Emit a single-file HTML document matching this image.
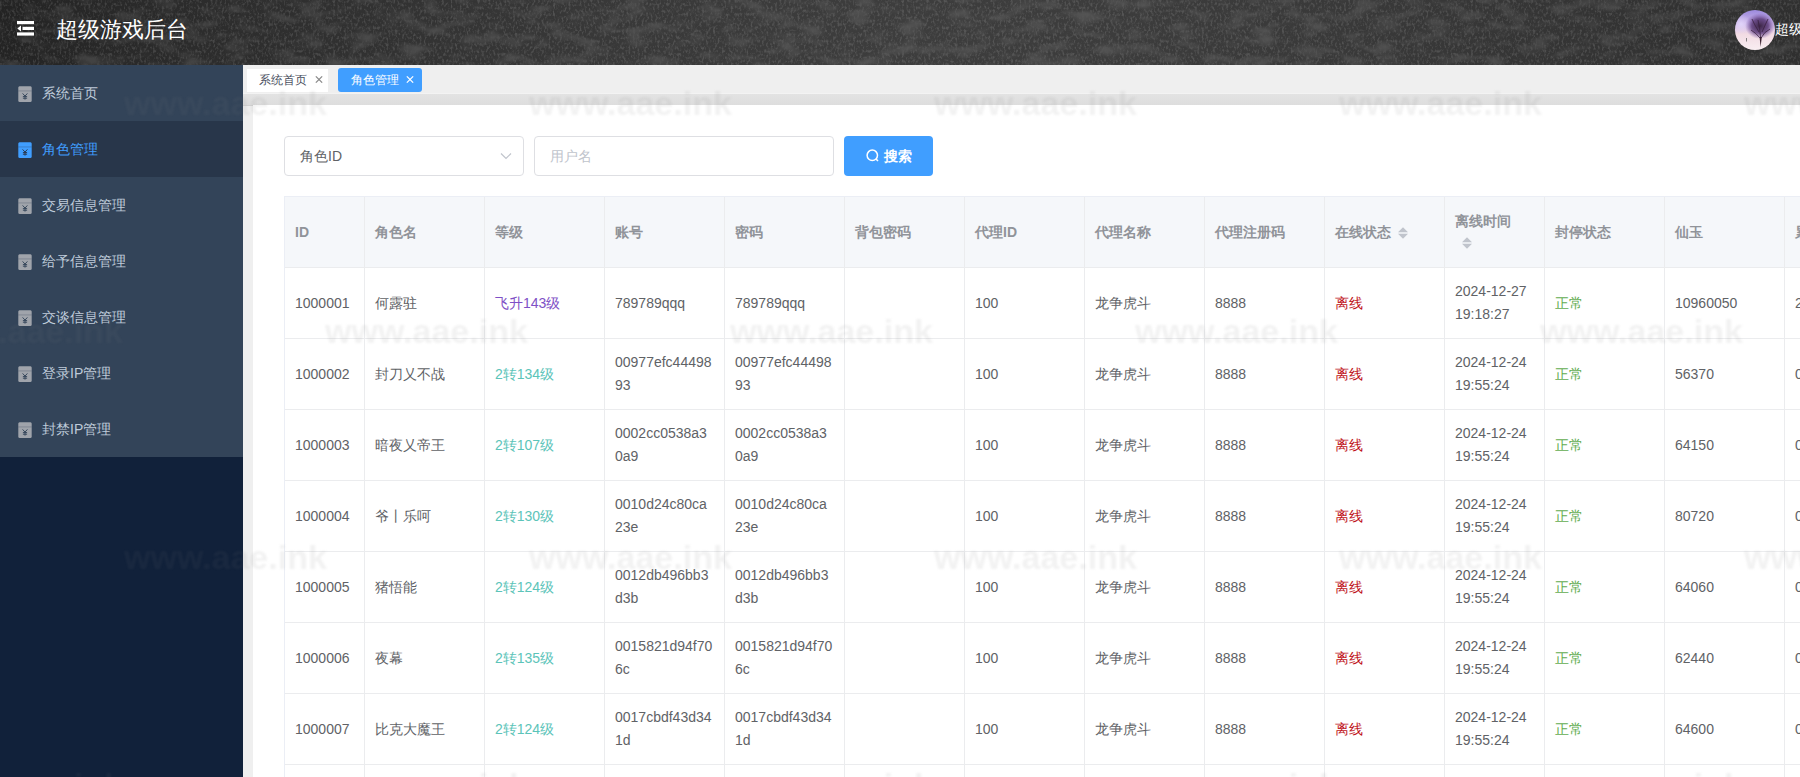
<!DOCTYPE html><html><head><meta charset="utf-8"><style>*{box-sizing:border-box;margin:0;padding:0}
html,body{width:1800px;height:777px;overflow:hidden;font-family:"Liberation Sans",sans-serif;background:#fff;position:relative}
.abs{position:absolute}
#hdr{left:0;top:0;width:1800px;height:65px;background:linear-gradient(90deg,#232323 0%,#2a2a2a 8%,#313131 20%,#383838 33%,#3d3d3d 50%,#3c3c3c 62%,#393939 75%,#343434 88%,#2f2f2f 100%)}
#noise{left:0;top:0;width:1800px;height:65px;opacity:0.12}
#burger{left:16.5px;top:21.4px;width:17px;height:14.6px}
#title{left:56px;top:17px;font-size:22.3px;color:#fff;line-height:26px;white-space:nowrap}
#avatar{left:1735px;top:10px;width:40px;height:40px}
#uname{left:1775px;top:21px;font-size:14px;line-height:16px;color:#fff;white-space:nowrap}
#side{left:0;top:65px;width:243px;height:712px;background:#11213a}
.mi{position:absolute;left:0;width:243px;height:56px;background:#334459;color:#bfcbd9;font-size:14px}
.mi.act{background:#28364a;color:#409eff}
.mi .ic{position:absolute;left:18px;top:21px;width:14px;height:16px}
.mi .tx{position:absolute;left:42px;top:19px;line-height:18px;white-space:nowrap}
#main{left:243px;top:65px;width:1557px;height:712px;background:#efefef}
#tabs{left:243px;top:65px;width:1557px;height:30px}
.tab{position:absolute;font-size:12px;line-height:14px;white-space:nowrap}
.tab .tl{position:absolute;top:5px}
.tab.t1{left:4px;top:4px;width:81px;height:23px;background:#fff;color:#495060}
.tab.t1 .tl{left:12px;top:4px}
.tab.t2{left:95px;top:3px;width:84px;height:24px;background:#409eff;color:#fff;border-radius:3px}
.tab.t2 .tl{left:13px}
.tab .x{position:absolute;width:8px;height:7px}
.tab.t1 .x{left:68px;top:7.3px}
.tab.t2 .x{left:68px;top:8px}
#tabshadow{left:243px;top:93px;width:1557px;height:13px;background:linear-gradient(#e3e3e3,#dddddd);border-top:1px solid #f3f3f3;border-bottom:1px solid #d3d3d3}
#card{left:253px;top:105px;width:1547px;height:672px;background:#fff}
.inp{position:absolute;top:136px;height:40px;border:1px solid #dedfe3;border-radius:4px;background:#fff;font-size:14px;line-height:38px;padding-left:15px;color:#606266}
#sel{left:284px;width:240px}
#user{left:534px;width:300px}
.chev{position:absolute;right:11px;top:15px;width:12px;height:8px}
#btn{left:844px;top:136px;width:89px;height:40px;background:#409eff;border-radius:4px;color:#fff;font-size:14px;font-weight:bold}
.sic{position:absolute;left:22px;top:13px;width:14px;height:14px}
.bt{position:absolute;left:40px;top:11px;line-height:18px}
.th,.td{position:absolute;border-right:1px solid #ebecee;border-bottom:1px solid #ebecee}
.th{background:#f5f7fa;color:#909399;font-weight:bold;font-size:14px}
.td{color:#606266;font-size:14px}
.tt{position:absolute;left:10px;top:26px;line-height:18px;white-space:nowrap}
.td .tt{top:26px}
.tt2{position:absolute;left:10px;top:12px;line-height:23px;white-space:nowrap}
.sort{width:10px;height:12px;display:block}
.sw{position:absolute;width:10px;height:11px}
.wm{position:absolute;font-size:34px;line-height:40px;font-weight:bold;color:rgba(140,140,140,0.11);white-space:nowrap;pointer-events:none;filter:blur(0.9px)}
</style></head><body>
<div id="hdr" class="abs"></div><svg id="noise" class="abs" width="1800" height="65"><filter id="nf" x="0" y="0" width="100%" height="100%"><feTurbulence type="fractalNoise" baseFrequency="0.04 0.09" numOctaves="2" seed="3" result="a"/><feColorMatrix in="a" values="0 0 0 0 1  0 0 0 0 1  0 0 0 0 1  0 0 0 -2.4 1.3" result="ca"/><feTurbulence type="fractalNoise" baseFrequency="0.45 0.3" numOctaves="2" seed="11" result="b"/><feColorMatrix in="b" values="0 0 0 0 1  0 0 0 0 1  0 0 0 0 1  0 0 0 -3.5 1.85" result="cb"/><feMerge><feMergeNode in="ca"/><feMergeNode in="cb"/></feMerge></filter><rect width="1800" height="65" filter="url(#nf)"/></svg>
<svg id="burger" class="abs" viewBox="0 0 17 14.6"><rect x="0" y="0" width="17" height="3.2" fill="#fff"/><rect x="5.5" y="5.8" width="11.5" height="3.2" fill="#fff"/><polygon points="0.3,7.5 4,4.6 4,10.4" fill="#fff"/><rect x="0" y="11.4" width="17" height="3.2" fill="#fff"/></svg>
<div id="title" class="abs">超级游戏后台</div>
<svg id="avatar" class="abs" viewBox="0 0 40 40"><defs><clipPath id="cc"><circle cx="20" cy="20" r="20"/></clipPath>
<linearGradient id="ag" x1="0" y1="0" x2="0" y2="1"><stop offset="0" stop-color="#9c8ade"/><stop offset="0.35" stop-color="#cdb5e6"/><stop offset="0.6" stop-color="#f2dbe3"/><stop offset="1" stop-color="#f9eef2"/></linearGradient>
<radialGradient id="hl" cx="0.5" cy="0.5" r="0.5"><stop offset="0" stop-color="#e6dcff" stop-opacity="0.8"/><stop offset="1" stop-color="#e6dcff" stop-opacity="0"/></radialGradient>
<radialGradient id="tg" cx="0.5" cy="0.5" r="0.5"><stop offset="0" stop-color="#3c2646"/><stop offset="0.55" stop-color="#5a3a78" stop-opacity="0.85"/><stop offset="1" stop-color="#7a5ab0" stop-opacity="0"/></radialGradient></defs>
<g clip-path="url(#cc)"><rect width="40" height="40" fill="url(#ag)"/><ellipse cx="6" cy="14" rx="10" ry="10" fill="url(#hl)"/><ellipse cx="25" cy="16" rx="15" ry="13" fill="url(#tg)"/><path d="M25.6 37 L24.6 27 L26.8 27 Z" fill="#3a2030"/><path d="M25 28 Q21 23 16 20 M26 28 Q29 22 35 19 M25.5 27 Q25 19 23 10 M24 22 Q19 14 17 9 M27 22 Q31 13 33 9" stroke="#3a2040" stroke-width="1" fill="none" opacity="0.8"/><rect x="11.2" y="28" width="0.7" height="3.5" fill="#555"/></g></svg><div id="uname" class="abs">超级</div>
<div id="side" class="abs">
<div class="mi" style="top:0px"><svg class="ic" viewBox="0 0 14 16"><path d="M1.5 0.3 H12.5 Q13.7 0.3 13.7 1.8 V14.5 Q13.7 16 12.3 16 H1.7 Q0.3 16 0.3 14.5 V1.8 Q0.3 0.3 1.5 0.3 Z" fill="#a0a4ab"/><rect x="0.3" y="4.6" width="13.4" height="0.7" fill="#334459" opacity="0.4"/><path d="M4.6 7.4 L7 10.1 L9.4 7.4 M7 10.1 V13.6 M4.9 10.6 H9.1 M4.9 12.2 H9.1" stroke="#334459" stroke-width="0.95" fill="none"/></svg><span class="tx">系统首页</span></div>
<div class="mi act" style="top:56px"><svg class="ic" viewBox="0 0 14 16"><path d="M1.5 0.3 H12.5 Q13.7 0.3 13.7 1.8 V14.5 Q13.7 16 12.3 16 H1.7 Q0.3 16 0.3 14.5 V1.8 Q0.3 0.3 1.5 0.3 Z" fill="#409eff"/><rect x="0.3" y="4.6" width="13.4" height="0.7" fill="#28364a" opacity="0.4"/><path d="M4.6 7.4 L7 10.1 L9.4 7.4 M7 10.1 V13.6 M4.9 10.6 H9.1 M4.9 12.2 H9.1" stroke="#28364a" stroke-width="0.95" fill="none"/></svg><span class="tx">角色管理</span></div>
<div class="mi" style="top:112px"><svg class="ic" viewBox="0 0 14 16"><path d="M1.5 0.3 H12.5 Q13.7 0.3 13.7 1.8 V14.5 Q13.7 16 12.3 16 H1.7 Q0.3 16 0.3 14.5 V1.8 Q0.3 0.3 1.5 0.3 Z" fill="#a0a4ab"/><rect x="0.3" y="4.6" width="13.4" height="0.7" fill="#334459" opacity="0.4"/><path d="M4.6 7.4 L7 10.1 L9.4 7.4 M7 10.1 V13.6 M4.9 10.6 H9.1 M4.9 12.2 H9.1" stroke="#334459" stroke-width="0.95" fill="none"/></svg><span class="tx">交易信息管理</span></div>
<div class="mi" style="top:168px"><svg class="ic" viewBox="0 0 14 16"><path d="M1.5 0.3 H12.5 Q13.7 0.3 13.7 1.8 V14.5 Q13.7 16 12.3 16 H1.7 Q0.3 16 0.3 14.5 V1.8 Q0.3 0.3 1.5 0.3 Z" fill="#a0a4ab"/><rect x="0.3" y="4.6" width="13.4" height="0.7" fill="#334459" opacity="0.4"/><path d="M4.6 7.4 L7 10.1 L9.4 7.4 M7 10.1 V13.6 M4.9 10.6 H9.1 M4.9 12.2 H9.1" stroke="#334459" stroke-width="0.95" fill="none"/></svg><span class="tx">给予信息管理</span></div>
<div class="mi" style="top:224px"><svg class="ic" viewBox="0 0 14 16"><path d="M1.5 0.3 H12.5 Q13.7 0.3 13.7 1.8 V14.5 Q13.7 16 12.3 16 H1.7 Q0.3 16 0.3 14.5 V1.8 Q0.3 0.3 1.5 0.3 Z" fill="#a0a4ab"/><rect x="0.3" y="4.6" width="13.4" height="0.7" fill="#334459" opacity="0.4"/><path d="M4.6 7.4 L7 10.1 L9.4 7.4 M7 10.1 V13.6 M4.9 10.6 H9.1 M4.9 12.2 H9.1" stroke="#334459" stroke-width="0.95" fill="none"/></svg><span class="tx">交谈信息管理</span></div>
<div class="mi" style="top:280px"><svg class="ic" viewBox="0 0 14 16"><path d="M1.5 0.3 H12.5 Q13.7 0.3 13.7 1.8 V14.5 Q13.7 16 12.3 16 H1.7 Q0.3 16 0.3 14.5 V1.8 Q0.3 0.3 1.5 0.3 Z" fill="#a0a4ab"/><rect x="0.3" y="4.6" width="13.4" height="0.7" fill="#334459" opacity="0.4"/><path d="M4.6 7.4 L7 10.1 L9.4 7.4 M7 10.1 V13.6 M4.9 10.6 H9.1 M4.9 12.2 H9.1" stroke="#334459" stroke-width="0.95" fill="none"/></svg><span class="tx">登录IP管理</span></div>
<div class="mi" style="top:336px"><svg class="ic" viewBox="0 0 14 16"><path d="M1.5 0.3 H12.5 Q13.7 0.3 13.7 1.8 V14.5 Q13.7 16 12.3 16 H1.7 Q0.3 16 0.3 14.5 V1.8 Q0.3 0.3 1.5 0.3 Z" fill="#a0a4ab"/><rect x="0.3" y="4.6" width="13.4" height="0.7" fill="#334459" opacity="0.4"/><path d="M4.6 7.4 L7 10.1 L9.4 7.4 M7 10.1 V13.6 M4.9 10.6 H9.1 M4.9 12.2 H9.1" stroke="#334459" stroke-width="0.95" fill="none"/></svg><span class="tx">封禁IP管理</span></div>
</div>
<div id="main" class="abs"></div>
<div id="tabs" class="abs"><div class="tab t1"><span class="tl">系统首页</span><svg class="x" viewBox="0 0 8 7"><line x1="0.8" y1="0.3" x2="7.2" y2="6.7" stroke="#888" stroke-width="1.1"/><line x1="7.2" y1="0.3" x2="0.8" y2="6.7" stroke="#888" stroke-width="1.1"/></svg></div><div class="tab t2"><span class="tl">角色管理</span><svg class="x" viewBox="0 0 8 7"><line x1="0.8" y1="0.3" x2="7.2" y2="6.7" stroke="#fff" stroke-width="1.1"/><line x1="7.2" y1="0.3" x2="0.8" y2="6.7" stroke="#fff" stroke-width="1.1"/></svg></div></div>
<div id="tabshadow" class="abs"></div>
<div id="card" class="abs"></div>
<div class="inp" id="sel">角色ID<svg class="chev" viewBox="0 0 12 8"><polyline points="1,1.5 6,6.5 11,1.5" fill="none" stroke="#c0c4cc" stroke-width="1.2"/></svg></div>
<div class="inp" id="user"><span style="color:#c0c4cc">用户名</span></div>
<div id="btn" class="abs"><svg class="sic" viewBox="0 0 14 14"><circle cx="6.3" cy="6.3" r="5.2" fill="none" stroke="#fff" stroke-width="1.5"/><line x1="9.9" y1="9.9" x2="12" y2="12" stroke="#fff" stroke-width="1.5"/></svg><span class="bt">搜索</span></div>
<div id="tbl" class="abs">
<div class="abs" style="left:284px;top:196px;width:1516px;height:581px;border-left:1px solid #ebeef5;border-top:1px solid #ebeef5"></div>
<div class="th" style="left:285px;top:197px;width:80px;height:71px"><span class="tt">ID</span></div>
<div class="th" style="left:365px;top:197px;width:120px;height:71px"><span class="tt">角色名</span></div>
<div class="th" style="left:485px;top:197px;width:120px;height:71px"><span class="tt">等级</span></div>
<div class="th" style="left:605px;top:197px;width:120px;height:71px"><span class="tt">账号</span></div>
<div class="th" style="left:725px;top:197px;width:120px;height:71px"><span class="tt">密码</span></div>
<div class="th" style="left:845px;top:197px;width:120px;height:71px"><span class="tt">背包密码</span></div>
<div class="th" style="left:965px;top:197px;width:120px;height:71px"><span class="tt">代理ID</span></div>
<div class="th" style="left:1085px;top:197px;width:120px;height:71px"><span class="tt">代理名称</span></div>
<div class="th" style="left:1205px;top:197px;width:120px;height:71px"><span class="tt">代理注册码</span></div>
<div class="th" style="left:1325px;top:197px;width:120px;height:71px"><span class="tt">在线状态</span><span class="sw" style="left:73px;top:30px"><svg class="sort" viewBox="0 0 10 11.5"><polygon points="5,0 10,5 0,5" fill="#c0c4cc"/><polygon points="5,11.5 10,6.5 0,6.5" fill="#c0c4cc"/></svg></span></div>
<div class="th" style="left:1445px;top:197px;width:100px;height:71px"><span class="tt" style="top:15px">离线时间</span><span class="sw" style="left:17px;top:40px"><svg class="sort" viewBox="0 0 10 11.5"><polygon points="5,0 10,5 0,5" fill="#c0c4cc"/><polygon points="5,11.5 10,6.5 0,6.5" fill="#c0c4cc"/></svg></span></div>
<div class="th" style="left:1545px;top:197px;width:120px;height:71px"><span class="tt">封停状态</span></div>
<div class="th" style="left:1665px;top:197px;width:120px;height:71px"><span class="tt">仙玉</span></div>
<div class="th" style="left:1785px;top:197px;width:120px;height:71px"><span class="tt">累</span></div>
<div class="td" style="left:285px;top:268px;width:80px;height:71px"><span class="tt">1000001</span></div>
<div class="td" style="left:365px;top:268px;width:120px;height:71px"><span class="tt">何露驻</span></div>
<div class="td" style="left:485px;top:268px;width:120px;height:71px"><span class="tt" style="color:#7e50c6">飞升143级</span></div>
<div class="td" style="left:605px;top:268px;width:120px;height:71px"><span class="tt">789789qqq</span></div>
<div class="td" style="left:725px;top:268px;width:120px;height:71px"><span class="tt">789789qqq</span></div>
<div class="td" style="left:845px;top:268px;width:120px;height:71px"><span class="tt"></span></div>
<div class="td" style="left:965px;top:268px;width:120px;height:71px"><span class="tt">100</span></div>
<div class="td" style="left:1085px;top:268px;width:120px;height:71px"><span class="tt">龙争虎斗</span></div>
<div class="td" style="left:1205px;top:268px;width:120px;height:71px"><span class="tt">8888</span></div>
<div class="td" style="left:1325px;top:268px;width:120px;height:71px"><span class="tt" style="color:#c0141b">离线</span></div>
<div class="td" style="left:1445px;top:268px;width:100px;height:71px"><span class="tt2">2024-12-27<br>19:18:27</span></div>
<div class="td" style="left:1545px;top:268px;width:120px;height:71px"><span class="tt" style="color:#62ad50">正常</span></div>
<div class="td" style="left:1665px;top:268px;width:120px;height:71px"><span class="tt">10960050</span></div>
<div class="td" style="left:1785px;top:268px;width:120px;height:71px"><span class="tt">2</span></div>
<div class="td" style="left:285px;top:339px;width:80px;height:71px"><span class="tt">1000002</span></div>
<div class="td" style="left:365px;top:339px;width:120px;height:71px"><span class="tt">封刀乂不战</span></div>
<div class="td" style="left:485px;top:339px;width:120px;height:71px"><span class="tt" style="color:#5cc4b9">2转134级</span></div>
<div class="td" style="left:605px;top:339px;width:120px;height:71px"><span class="tt2">00977efc44498<br>93</span></div>
<div class="td" style="left:725px;top:339px;width:120px;height:71px"><span class="tt2">00977efc44498<br>93</span></div>
<div class="td" style="left:845px;top:339px;width:120px;height:71px"><span class="tt"></span></div>
<div class="td" style="left:965px;top:339px;width:120px;height:71px"><span class="tt">100</span></div>
<div class="td" style="left:1085px;top:339px;width:120px;height:71px"><span class="tt">龙争虎斗</span></div>
<div class="td" style="left:1205px;top:339px;width:120px;height:71px"><span class="tt">8888</span></div>
<div class="td" style="left:1325px;top:339px;width:120px;height:71px"><span class="tt" style="color:#c0141b">离线</span></div>
<div class="td" style="left:1445px;top:339px;width:100px;height:71px"><span class="tt2">2024-12-24<br>19:55:24</span></div>
<div class="td" style="left:1545px;top:339px;width:120px;height:71px"><span class="tt" style="color:#62ad50">正常</span></div>
<div class="td" style="left:1665px;top:339px;width:120px;height:71px"><span class="tt">56370</span></div>
<div class="td" style="left:1785px;top:339px;width:120px;height:71px"><span class="tt">0</span></div>
<div class="td" style="left:285px;top:410px;width:80px;height:71px"><span class="tt">1000003</span></div>
<div class="td" style="left:365px;top:410px;width:120px;height:71px"><span class="tt">暗夜乂帝王</span></div>
<div class="td" style="left:485px;top:410px;width:120px;height:71px"><span class="tt" style="color:#5cc4b9">2转107级</span></div>
<div class="td" style="left:605px;top:410px;width:120px;height:71px"><span class="tt2">0002cc0538a3<br>0a9</span></div>
<div class="td" style="left:725px;top:410px;width:120px;height:71px"><span class="tt2">0002cc0538a3<br>0a9</span></div>
<div class="td" style="left:845px;top:410px;width:120px;height:71px"><span class="tt"></span></div>
<div class="td" style="left:965px;top:410px;width:120px;height:71px"><span class="tt">100</span></div>
<div class="td" style="left:1085px;top:410px;width:120px;height:71px"><span class="tt">龙争虎斗</span></div>
<div class="td" style="left:1205px;top:410px;width:120px;height:71px"><span class="tt">8888</span></div>
<div class="td" style="left:1325px;top:410px;width:120px;height:71px"><span class="tt" style="color:#c0141b">离线</span></div>
<div class="td" style="left:1445px;top:410px;width:100px;height:71px"><span class="tt2">2024-12-24<br>19:55:24</span></div>
<div class="td" style="left:1545px;top:410px;width:120px;height:71px"><span class="tt" style="color:#62ad50">正常</span></div>
<div class="td" style="left:1665px;top:410px;width:120px;height:71px"><span class="tt">64150</span></div>
<div class="td" style="left:1785px;top:410px;width:120px;height:71px"><span class="tt">0</span></div>
<div class="td" style="left:285px;top:481px;width:80px;height:71px"><span class="tt">1000004</span></div>
<div class="td" style="left:365px;top:481px;width:120px;height:71px"><span class="tt">爷丨乐呵</span></div>
<div class="td" style="left:485px;top:481px;width:120px;height:71px"><span class="tt" style="color:#5cc4b9">2转130级</span></div>
<div class="td" style="left:605px;top:481px;width:120px;height:71px"><span class="tt2">0010d24c80ca<br>23e</span></div>
<div class="td" style="left:725px;top:481px;width:120px;height:71px"><span class="tt2">0010d24c80ca<br>23e</span></div>
<div class="td" style="left:845px;top:481px;width:120px;height:71px"><span class="tt"></span></div>
<div class="td" style="left:965px;top:481px;width:120px;height:71px"><span class="tt">100</span></div>
<div class="td" style="left:1085px;top:481px;width:120px;height:71px"><span class="tt">龙争虎斗</span></div>
<div class="td" style="left:1205px;top:481px;width:120px;height:71px"><span class="tt">8888</span></div>
<div class="td" style="left:1325px;top:481px;width:120px;height:71px"><span class="tt" style="color:#c0141b">离线</span></div>
<div class="td" style="left:1445px;top:481px;width:100px;height:71px"><span class="tt2">2024-12-24<br>19:55:24</span></div>
<div class="td" style="left:1545px;top:481px;width:120px;height:71px"><span class="tt" style="color:#62ad50">正常</span></div>
<div class="td" style="left:1665px;top:481px;width:120px;height:71px"><span class="tt">80720</span></div>
<div class="td" style="left:1785px;top:481px;width:120px;height:71px"><span class="tt">0</span></div>
<div class="td" style="left:285px;top:552px;width:80px;height:71px"><span class="tt">1000005</span></div>
<div class="td" style="left:365px;top:552px;width:120px;height:71px"><span class="tt">猪悟能</span></div>
<div class="td" style="left:485px;top:552px;width:120px;height:71px"><span class="tt" style="color:#5cc4b9">2转124级</span></div>
<div class="td" style="left:605px;top:552px;width:120px;height:71px"><span class="tt2">0012db496bb3<br>d3b</span></div>
<div class="td" style="left:725px;top:552px;width:120px;height:71px"><span class="tt2">0012db496bb3<br>d3b</span></div>
<div class="td" style="left:845px;top:552px;width:120px;height:71px"><span class="tt"></span></div>
<div class="td" style="left:965px;top:552px;width:120px;height:71px"><span class="tt">100</span></div>
<div class="td" style="left:1085px;top:552px;width:120px;height:71px"><span class="tt">龙争虎斗</span></div>
<div class="td" style="left:1205px;top:552px;width:120px;height:71px"><span class="tt">8888</span></div>
<div class="td" style="left:1325px;top:552px;width:120px;height:71px"><span class="tt" style="color:#c0141b">离线</span></div>
<div class="td" style="left:1445px;top:552px;width:100px;height:71px"><span class="tt2">2024-12-24<br>19:55:24</span></div>
<div class="td" style="left:1545px;top:552px;width:120px;height:71px"><span class="tt" style="color:#62ad50">正常</span></div>
<div class="td" style="left:1665px;top:552px;width:120px;height:71px"><span class="tt">64060</span></div>
<div class="td" style="left:1785px;top:552px;width:120px;height:71px"><span class="tt">0</span></div>
<div class="td" style="left:285px;top:623px;width:80px;height:71px"><span class="tt">1000006</span></div>
<div class="td" style="left:365px;top:623px;width:120px;height:71px"><span class="tt">夜幕</span></div>
<div class="td" style="left:485px;top:623px;width:120px;height:71px"><span class="tt" style="color:#5cc4b9">2转135级</span></div>
<div class="td" style="left:605px;top:623px;width:120px;height:71px"><span class="tt2">0015821d94f70<br>6c</span></div>
<div class="td" style="left:725px;top:623px;width:120px;height:71px"><span class="tt2">0015821d94f70<br>6c</span></div>
<div class="td" style="left:845px;top:623px;width:120px;height:71px"><span class="tt"></span></div>
<div class="td" style="left:965px;top:623px;width:120px;height:71px"><span class="tt">100</span></div>
<div class="td" style="left:1085px;top:623px;width:120px;height:71px"><span class="tt">龙争虎斗</span></div>
<div class="td" style="left:1205px;top:623px;width:120px;height:71px"><span class="tt">8888</span></div>
<div class="td" style="left:1325px;top:623px;width:120px;height:71px"><span class="tt" style="color:#c0141b">离线</span></div>
<div class="td" style="left:1445px;top:623px;width:100px;height:71px"><span class="tt2">2024-12-24<br>19:55:24</span></div>
<div class="td" style="left:1545px;top:623px;width:120px;height:71px"><span class="tt" style="color:#62ad50">正常</span></div>
<div class="td" style="left:1665px;top:623px;width:120px;height:71px"><span class="tt">62440</span></div>
<div class="td" style="left:1785px;top:623px;width:120px;height:71px"><span class="tt">0</span></div>
<div class="td" style="left:285px;top:694px;width:80px;height:71px"><span class="tt">1000007</span></div>
<div class="td" style="left:365px;top:694px;width:120px;height:71px"><span class="tt">比克大魔王</span></div>
<div class="td" style="left:485px;top:694px;width:120px;height:71px"><span class="tt" style="color:#5cc4b9">2转124级</span></div>
<div class="td" style="left:605px;top:694px;width:120px;height:71px"><span class="tt2">0017cbdf43d34<br>1d</span></div>
<div class="td" style="left:725px;top:694px;width:120px;height:71px"><span class="tt2">0017cbdf43d34<br>1d</span></div>
<div class="td" style="left:845px;top:694px;width:120px;height:71px"><span class="tt"></span></div>
<div class="td" style="left:965px;top:694px;width:120px;height:71px"><span class="tt">100</span></div>
<div class="td" style="left:1085px;top:694px;width:120px;height:71px"><span class="tt">龙争虎斗</span></div>
<div class="td" style="left:1205px;top:694px;width:120px;height:71px"><span class="tt">8888</span></div>
<div class="td" style="left:1325px;top:694px;width:120px;height:71px"><span class="tt" style="color:#c0141b">离线</span></div>
<div class="td" style="left:1445px;top:694px;width:100px;height:71px"><span class="tt2">2024-12-24<br>19:55:24</span></div>
<div class="td" style="left:1545px;top:694px;width:120px;height:71px"><span class="tt" style="color:#62ad50">正常</span></div>
<div class="td" style="left:1665px;top:694px;width:120px;height:71px"><span class="tt">64600</span></div>
<div class="td" style="left:1785px;top:694px;width:120px;height:71px"><span class="tt">0</span></div>
<div class="td" style="left:285px;top:765px;width:80px;height:71px"><span class="tt"></span></div>
<div class="td" style="left:365px;top:765px;width:120px;height:71px"><span class="tt"></span></div>
<div class="td" style="left:485px;top:765px;width:120px;height:71px"><span class="tt"></span></div>
<div class="td" style="left:605px;top:765px;width:120px;height:71px"><span class="tt"></span></div>
<div class="td" style="left:725px;top:765px;width:120px;height:71px"><span class="tt"></span></div>
<div class="td" style="left:845px;top:765px;width:120px;height:71px"><span class="tt"></span></div>
<div class="td" style="left:965px;top:765px;width:120px;height:71px"><span class="tt"></span></div>
<div class="td" style="left:1085px;top:765px;width:120px;height:71px"><span class="tt"></span></div>
<div class="td" style="left:1205px;top:765px;width:120px;height:71px"><span class="tt"></span></div>
<div class="td" style="left:1325px;top:765px;width:120px;height:71px"><span class="tt" style="color:#c0141b"></span></div>
<div class="td" style="left:1445px;top:765px;width:100px;height:71px"><span class="tt"></span></div>
<div class="td" style="left:1545px;top:765px;width:120px;height:71px"><span class="tt" style="color:#62ad50"></span></div>
<div class="td" style="left:1665px;top:765px;width:120px;height:71px"><span class="tt"></span></div>
<div class="td" style="left:1785px;top:765px;width:120px;height:71px"><span class="tt"></span></div>
</div>
<div class="abs" style="left:0px;top:0;width:243px;height:777px;overflow:hidden">
<div class="wm" style="left:124px;top:83px;color:rgba(140,140,140,0.07)">www.aae.ink</div>
<div class="wm" style="left:529px;top:83px;color:rgba(140,140,140,0.07)">www.aae.ink</div>
<div class="wm" style="left:934px;top:83px;color:rgba(140,140,140,0.07)">www.aae.ink</div>
<div class="wm" style="left:1339px;top:83px;color:rgba(140,140,140,0.07)">www.aae.ink</div>
<div class="wm" style="left:1744px;top:83px;color:rgba(140,140,140,0.07)">www.aae.ink</div>
<div class="wm" style="left:-80px;top:311px;color:rgba(140,140,140,0.07)">www.aae.ink</div>
<div class="wm" style="left:325px;top:311px;color:rgba(140,140,140,0.07)">www.aae.ink</div>
<div class="wm" style="left:730px;top:311px;color:rgba(140,140,140,0.07)">www.aae.ink</div>
<div class="wm" style="left:1135px;top:311px;color:rgba(140,140,140,0.07)">www.aae.ink</div>
<div class="wm" style="left:1540px;top:311px;color:rgba(140,140,140,0.07)">www.aae.ink</div>
<div class="wm" style="left:124px;top:537px;color:rgba(140,140,140,0.07)">www.aae.ink</div>
<div class="wm" style="left:529px;top:537px;color:rgba(140,140,140,0.07)">www.aae.ink</div>
<div class="wm" style="left:934px;top:537px;color:rgba(140,140,140,0.07)">www.aae.ink</div>
<div class="wm" style="left:1339px;top:537px;color:rgba(140,140,140,0.07)">www.aae.ink</div>
<div class="wm" style="left:1744px;top:537px;color:rgba(140,140,140,0.07)">www.aae.ink</div>
<div class="wm" style="left:-80px;top:765px;color:rgba(140,140,140,0.07)">www.aae.ink</div>
<div class="wm" style="left:325px;top:765px;color:rgba(140,140,140,0.07)">www.aae.ink</div>
<div class="wm" style="left:730px;top:765px;color:rgba(140,140,140,0.07)">www.aae.ink</div>
<div class="wm" style="left:1135px;top:765px;color:rgba(140,140,140,0.07)">www.aae.ink</div>
<div class="wm" style="left:1540px;top:765px;color:rgba(140,140,140,0.07)">www.aae.ink</div>
</div>
<div class="abs" style="left:243px;top:0;width:1557px;height:777px;overflow:hidden">
<div class="wm" style="left:-119px;top:83px;color:rgba(140,140,140,0.11)">www.aae.ink</div>
<div class="wm" style="left:286px;top:83px;color:rgba(140,140,140,0.11)">www.aae.ink</div>
<div class="wm" style="left:691px;top:83px;color:rgba(140,140,140,0.11)">www.aae.ink</div>
<div class="wm" style="left:1096px;top:83px;color:rgba(140,140,140,0.11)">www.aae.ink</div>
<div class="wm" style="left:1501px;top:83px;color:rgba(140,140,140,0.11)">www.aae.ink</div>
<div class="wm" style="left:-323px;top:311px;color:rgba(140,140,140,0.11)">www.aae.ink</div>
<div class="wm" style="left:82px;top:311px;color:rgba(140,140,140,0.11)">www.aae.ink</div>
<div class="wm" style="left:487px;top:311px;color:rgba(140,140,140,0.11)">www.aae.ink</div>
<div class="wm" style="left:892px;top:311px;color:rgba(140,140,140,0.11)">www.aae.ink</div>
<div class="wm" style="left:1297px;top:311px;color:rgba(140,140,140,0.11)">www.aae.ink</div>
<div class="wm" style="left:-119px;top:537px;color:rgba(140,140,140,0.11)">www.aae.ink</div>
<div class="wm" style="left:286px;top:537px;color:rgba(140,140,140,0.11)">www.aae.ink</div>
<div class="wm" style="left:691px;top:537px;color:rgba(140,140,140,0.11)">www.aae.ink</div>
<div class="wm" style="left:1096px;top:537px;color:rgba(140,140,140,0.11)">www.aae.ink</div>
<div class="wm" style="left:1501px;top:537px;color:rgba(140,140,140,0.11)">www.aae.ink</div>
<div class="wm" style="left:-323px;top:765px;color:rgba(140,140,140,0.11)">www.aae.ink</div>
<div class="wm" style="left:82px;top:765px;color:rgba(140,140,140,0.11)">www.aae.ink</div>
<div class="wm" style="left:487px;top:765px;color:rgba(140,140,140,0.11)">www.aae.ink</div>
<div class="wm" style="left:892px;top:765px;color:rgba(140,140,140,0.11)">www.aae.ink</div>
<div class="wm" style="left:1297px;top:765px;color:rgba(140,140,140,0.11)">www.aae.ink</div>
</div>
</body></html>
